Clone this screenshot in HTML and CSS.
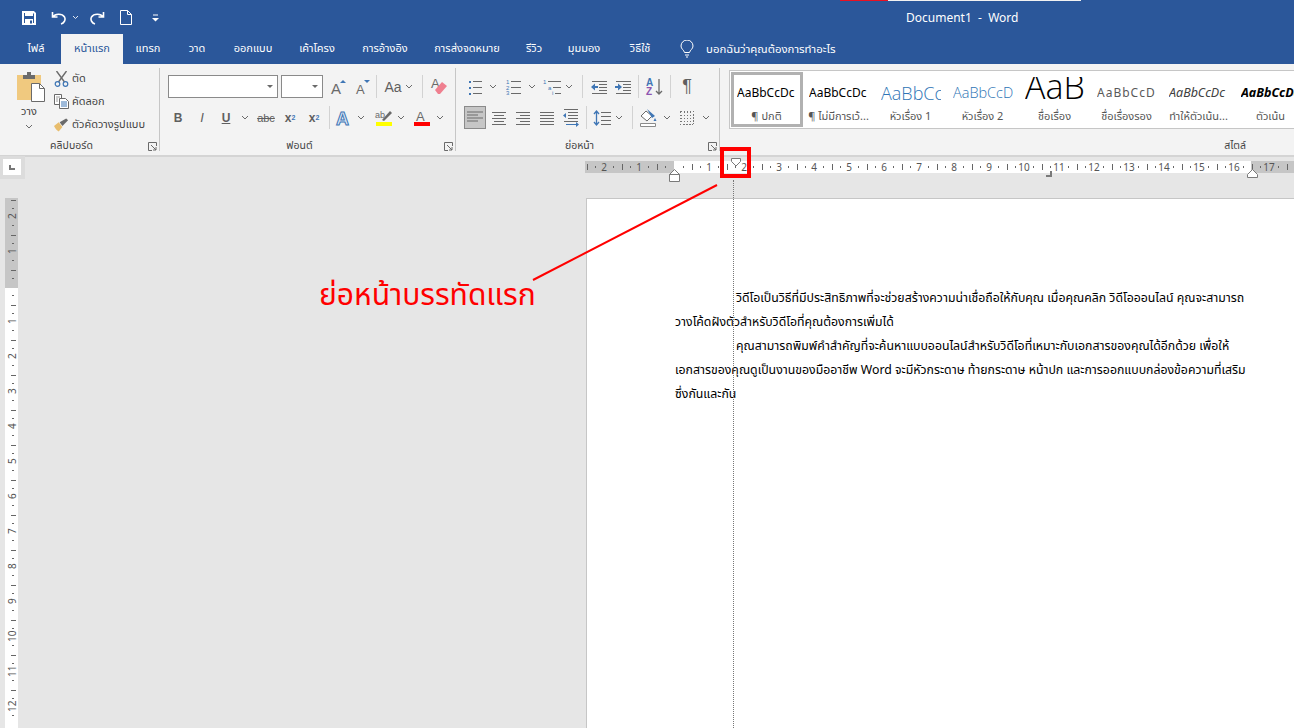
FILE: index.html
```html
<!DOCTYPE html>
<html lang="th">
<head>
    <meta charset="UTF-8">
    <title>Document1 - Word</title>
    <link rel="stylesheet" href="styles.css">
</head>
<body>
    <header class="titlebar">
        <div class="strip"><span class="strip-red"></span><span class="strip-white"></span></div>
        <div class="title-row">
            <div class="qat">
                <svg class="q-save" width="14" height="14" viewBox="0 0 14 14"><path d="M1 1h10.500L13 2.500V13H1z" fill="none" stroke="#fff" stroke-width="2"/><path d="M3 1h8v4H3zM3 8h8v5H3z" fill="#fff"/><path d="M8 9.500h2v3H8z" fill="#2b579a"/></svg>
                <svg class="q-undo" width="15" height="14" viewBox="0 0 15 14"><path d="M1.500 1v5h5M2 6c2-3.500 9-4 11.500 0 1.500 3-.5 6-3.500 7" fill="none" stroke="#fff" stroke-width="1.600"/></svg>
                <svg class="q-chev" width="7" height="5" viewBox="0 0 7 5"><path d="M1 1l2.500 2.500L6 1" fill="none" stroke="#dfe6f1"/></svg>
                <svg class="q-redo" width="15" height="14" viewBox="0 0 15 14"><path d="M13.500 1v5h-5M13 6C11 2.500 4 2 1.500 6 0 9 2 12 5 13" fill="none" stroke="#fff" stroke-width="1.600"/></svg>
                <svg class="q-new" width="12" height="15" viewBox="0 0 12 15"><path d="M.5.500h7l4 4v10H.5zM7.500.5v4h4" fill="none" stroke="#fff"/></svg>
                <svg class="q-more" width="7" height="8" viewBox="0 0 7 8"><path d="M1 1h5" stroke="#fff"/><path d="M0 4h7L3.500 7.500z" fill="#fff"/></svg>
            </div>
            <div class="doc-title">Document1&nbsp; -&nbsp; Word</div>
        </div>
        <nav class="tabs">
            <span class="tab t-file">ไฟล์</span>
            <span class="tab t-home active">หน้าแรก</span>
            <span class="tab t-insert">แทรก</span>
            <span class="tab t-draw">วาด</span>
            <span class="tab t-design">ออกแบบ</span>
            <span class="tab t-layout">เค้าโครง</span>
            <span class="tab t-refs">การอ้างอิง</span>
            <span class="tab t-mail">การส่งจดหมาย</span>
            <span class="tab t-review">รีวิว</span>
            <span class="tab t-view">มุมมอง</span>
            <span class="tab t-video">วิธีใช้</span>
            <svg class="bulb" width="14" height="18" viewBox="0 0 14 18"><path d="M4.500 12.500C4 10 1 9 1 6a6 6 0 0 1 12 0c0 3-3 4-3.500 6.500zM5 15h4M6 17h2" fill="none" stroke="#fff"/></svg>
            <span class="tell">บอกฉันว่าคุณต้องการทำอะไร</span>
        </nav>
    </header>

    <section class="ribbon">
        <div class="group g-clip">
            <div class="clip-body">
                <div class="paste">
                    <svg class="paste-icon" width="28" height="30" viewBox="0 0 28 30"><path d="M0 3h24v25H0z" fill="#f0c97f"/><path d="M6 3h12v4H6z" fill="#6b6b6b"/><path d="M10 0h4v3h-4z" fill="#6b6b6b"/><path d="M14.500 11.500h8l5 5v13h-13z" fill="#fff" stroke="#6a6a6a"/><path d="M22.500 11.500v5h5" fill="none" stroke="#6a6a6a"/></svg>
                    <span class="paste-label">วาง</span>
                    <svg class="chev" width="8" height="5" viewBox="0 0 8 5"><path d="M1 1l3 3 3-3" fill="none" stroke="#6a6a6a"/></svg>
                </div>
                <div class="clip-list">
                    <div class="clip-item">
                        <svg width="14" height="16" viewBox="0 0 14 16"><path d="M2 0l8 11M12 0L4 11" stroke="#6a6a6a" stroke-width="1.400"/><circle cx="3" cy="13" r="2.300" fill="none" stroke="#3f76b5" stroke-width="1.200"/><circle cx="11" cy="13" r="2.300" fill="none" stroke="#3f76b5" stroke-width="1.200"/></svg>
                        <span>ตัด</span>
                    </div>
                    <div class="clip-item">
                        <svg width="15" height="15" viewBox="0 0 15 15"><path d="M.5.500h7v10h-7z" fill="#fff" stroke="#6a6a6a"/><path d="M5.500 4.500h6l3 3v7h-9z" fill="#fff" stroke="#6a6a6a"/><path d="M7 8h6M7 10h6M7 12h6" stroke="#3f76b5"/><path d="M2 3h4M2 5h2M2 7h2" stroke="#9a9a9a"/></svg>
                        <span>คัดลอก</span>
                    </div>
                    <div class="clip-item">
                        <svg width="16" height="14" viewBox="0 0 16 14"><path d="M0 8l5-4 4 5-4 5c-2-1-4-4-5-6z" fill="#e8bd6d"/><path d="M6 4l3 4 6-6-2-2z" fill="#6a6a6a"/></svg>
                        <span>ตัวคัดวางรูปแบบ</span>
                    </div>
                </div>
            </div>
            <div class="group-label">คลิปบอร์ด</div>
            <svg class="launcher" width="9" height="9" viewBox="0 0 9 9"><path d="M8.500 4V.5H.5v8H4M3 3l5 5M8 5v3H5" fill="none" stroke="#6a6a6a"/></svg>
        </div>

        <div class="group g-font">
            <div class="row">
                <div class="combo c-font"><i class="caret"></i></div>
                <div class="combo c-size"><i class="caret"></i></div>
                <svg class="icon" width="18" height="18" viewBox="0 0 18 18"><text x="2" y="16" class="ic-a">A</text><path d="M11 5l3-3 3 3z" fill="#3f76b5"/></svg>
                <svg class="icon" width="18" height="18" viewBox="0 0 18 18"><text x="3" y="16" class="ic-a small">A</text><path d="M11 2l3 3 3-3z" fill="#3f76b5"/></svg>
                <i class="sep s5"></i>
                <span class="icon txt aa g7">Aa</span>
                <svg class="chev g3" width="8" height="5" viewBox="0 0 8 5"><path d="M1 1l3 3 3-3" fill="none" stroke="#6a6a6a"/></svg>
                <i class="sep g9"></i>
                <svg class="icon g7" width="18" height="18" viewBox="0 0 18 18"><text x="1" y="10" class="ic-a small">A</text><path d="M5 12l7-8 5 4-7 8H8z" fill="#ef7f8f"/></svg>
            </div>
            <div class="row r2">
                <span class="icon txt b">B</span>
                <span class="icon txt i">I</span>
                <span class="icon txt u">U</span>
                <svg class="chev" width="8" height="5" viewBox="0 0 8 5"><path d="M1 1l3 3 3-3" fill="none" stroke="#6a6a6a"/></svg>
                <span class="icon txt abc g8">abc</span>
                <span class="icon txt b">x<sub>2</sub></span>
                <span class="icon txt b">x<sup>2</sup></span>
                <i class="sep"></i>
                <svg class="icon" width="18" height="20" viewBox="0 0 18 20"><text x="0" y="17" class="ic-outline">A</text></svg>
                <svg class="chev g3" width="8" height="5" viewBox="0 0 8 5"><path d="M1 1l3 3 3-3" fill="none" stroke="#6a6a6a"/></svg>
                <svg class="icon g10" width="18" height="18" viewBox="0 0 18 18"><text x="0" y="9" class="ic-ab">ab</text><path d="M7 11l8-9 2 2-8 8z" fill="#6a6a6a"/><path d="M1 13h16v4H1z" fill="#ff0"/></svg>
                <svg class="chev g4" width="8" height="5" viewBox="0 0 8 5"><path d="M1 1l3 3 3-3" fill="none" stroke="#6a6a6a"/></svg>
                <svg class="icon g8" width="18" height="18" viewBox="0 0 18 18"><text x="3" y="12" class="ic-a small">A</text><path d="M1 13h16v4H1z" fill="#f00"/></svg>
                <svg class="chev g5" width="8" height="5" viewBox="0 0 8 5"><path d="M1 1l3 3 3-3" fill="none" stroke="#6a6a6a"/></svg>
            </div>
            <div class="group-label">ฟอนต์</div>
            <svg class="launcher" width="9" height="9" viewBox="0 0 9 9"><path d="M8.500 4V.5H.5v8H4M3 3l5 5M8 5v3H5" fill="none" stroke="#6a6a6a"/></svg>
        </div>

        <div class="group g-para">
            <div class="row">
                <svg class="icon" width="18" height="16" viewBox="0 0 18 16"><path d="M3 2h2v2H3zM3 8h2v2H3zM3 14h2v2H3z" fill="#3f76b5"/><path d="M7 2.500h9M7 8.500h9M7 14.500h9" stroke="#6a6a6a"/></svg>
                <svg class="chev g5" width="8" height="5" viewBox="0 0 8 5"><path d="M1 1l3 3 3-3" fill="none" stroke="#6a6a6a"/></svg>
                <svg class="icon g7" width="18" height="16" viewBox="0 0 18 16"><text x="2" y="5" class="ic-n">1</text><text x="2" y="10.500" class="ic-n">2</text><text x="2" y="16" class="ic-n">3</text><path d="M7 2.500h10M7 8.500h10M7 14.500h10" stroke="#6a6a6a"/></svg>
                <svg class="chev" width="8" height="5" viewBox="0 0 8 5"><path d="M1 1l3 3 3-3" fill="none" stroke="#6a6a6a"/></svg>
                <svg class="icon g7" width="18" height="16" viewBox="0 0 18 16"><text x="0" y="5" class="ic-n">1</text><text x="5" y="10.500" class="ic-n">a</text><text x="9" y="16" class="ic-n">i</text><path d="M5 2.500h13M10 8.500h8M12 14.500h6" stroke="#6a6a6a"/></svg>
                <svg class="chev g4" width="8" height="5" viewBox="0 0 8 5"><path d="M1 1l3 3 3-3" fill="none" stroke="#6a6a6a"/></svg>
                <i class="sep g9"></i>
                <svg class="icon g7" width="18" height="14" viewBox="0 0 18 14"><path d="M2 1.500h15M9 4.500h8M9 7.500h8M9 10.500h8M2 13.500h15" stroke="#6a6a6a"/><path d="M1 7l4-3.500V6h3v2H5v2.500z" fill="#3f76b5"/></svg>
                <svg class="icon" width="18" height="14" viewBox="0 0 18 14"><path d="M2 1.500h15M9 4.500h8M9 7.500h8M9 10.500h8M2 13.500h15" stroke="#6a6a6a"/><path d="M8 7L4 3.500V6H1v2h3v2.500z" fill="#3f76b5"/></svg>
                <i class="sep"></i>
                <svg class="icon g7" width="18" height="18" viewBox="0 0 18 18"><text x="0" y="8" class="ic-sort blue">A</text><text x="0" y="17" class="ic-sort violet">Z</text><path d="M13 1v15M10 13l3 3 3-3" fill="none" stroke="#6a6a6a" stroke-width="1.300"/></svg>
                <i class="sep"></i>
                <span class="icon txt pil g7">¶</span>
            </div>
            <div class="row r2">
                <svg class="icon active-btn" width="18" height="14" viewBox="0 0 18 14"><path d="M1 1.500h16M1 4.500h11M1 7.500h16M1 10.500h11" stroke="#6a6a6a"/></svg>
                <svg class="icon" width="18" height="14" viewBox="0 0 18 14"><path d="M2 1.500h14M4 4.500h10M2 7.500h14M4 10.500h10M2 13.500h14" stroke="#6a6a6a"/></svg>
                <svg class="icon" width="18" height="14" viewBox="0 0 18 14"><path d="M2 1.500h14M6 4.500h10M2 7.500h14M6 10.500h10M2 13.500h14" stroke="#6a6a6a"/></svg>
                <svg class="icon" width="18" height="14" viewBox="0 0 18 14"><path d="M2 1.500h14M2 4.500h14M2 7.500h14M2 10.500h14M2 13.500h14" stroke="#6a6a6a"/></svg>
                <svg class="icon" width="18" height="18" viewBox="0 0 18 18"><path d="M2 .5h14M6 3.500h10M6 6.500h10M6 9.500h10M2 12.500h14" stroke="#6a6a6a"/><path d="M1 6.500L4 4v5zM17 15.500L14 13v5z" fill="#3f76b5"/><path d="M4 15.500h10" stroke="#3f76b5"/></svg>
                <i class="sep"></i>
                <svg class="icon" width="18" height="18" viewBox="0 0 18 18"><path d="M3.500 3v12M1 5l2.500-3L6 5M1 13l2.500 3L6 13" fill="none" stroke="#3f76b5" stroke-width="1.300"/><path d="M8 3.500h10M8 7.500h10M8 11.500h10M8 15.500h10" stroke="#6a6a6a"/></svg>
                <svg class="chev g4" width="8" height="5" viewBox="0 0 8 5"><path d="M1 1l3 3 3-3" fill="none" stroke="#6a6a6a"/></svg>
                <i class="sep g9"></i>
                <svg class="icon g7" width="18" height="18" viewBox="0 0 18 18"><path d="M1 7l5-5 6 5-5 5z" fill="#fff" stroke="#6a6a6a"/><path d="M7 0l8 7-3 2z" fill="#3f76b5"/><path d="M15 9l1.500 3h-3z" fill="#3f76b5"/><path d="M.5 14.500h15v3H.5z" fill="#fff" stroke="#8a8a8a"/></svg>
                <svg class="chev g5" width="8" height="5" viewBox="0 0 8 5"><path d="M1 1l3 3 3-3" fill="none" stroke="#6a6a6a"/></svg>
                <svg class="icon g7" width="14" height="14" viewBox="0 0 14 14"><path class="dots" d="M.5.500h13v13H.5zM7 .5v13M.5 7h13M4 .5v13M10 .5v13M.5 4h13M.5 10h13"/></svg>
                <svg class="chev" width="8" height="5" viewBox="0 0 8 5"><path d="M1 1l3 3 3-3" fill="none" stroke="#6a6a6a"/></svg>
            </div>
            <div class="group-label">ย่อหน้า</div>
            <svg class="launcher" width="9" height="9" viewBox="0 0 9 9"><path d="M8.500 4V.5H.5v8H4M3 3l5 5M8 5v3H5" fill="none" stroke="#6a6a6a"/></svg>
        </div>

        <div class="group g-styles">
            <div class="gallery">
                <div class="style current"><div class="sample s-normal">AaBbCcDc</div><div class="style-name">¶ ปกติ</div></div>
                <div class="style"><div class="sample s-normal">AaBbCcDc</div><div class="style-name">¶ ไม่มีการเว้...</div></div>
                <div class="style"><div class="sample s-h1">AaBbCc</div><div class="style-name">หัวเรื่อง 1</div></div>
                <div class="style"><div class="sample s-h2">AaBbCcD</div><div class="style-name">หัวเรื่อง 2</div></div>
                <div class="style"><div class="sample s-title">AaB</div><div class="style-name">ชื่อเรื่อง</div></div>
                <div class="style"><div class="sample s-sub">AaBbCcD</div><div class="style-name">ชื่อเรื่องรอง</div></div>
                <div class="style"><div class="sample s-em">AaBbCcDc</div><div class="style-name">ทำให้ตัวเน้น...</div></div>
                <div class="style"><div class="sample s-strong">AaBbCcDc</div><div class="style-name">ตัวเน้น</div></div>
            </div>
            <div class="group-label styles-label">สไตล์</div>
        </div>
    </section>

    <section class="ruler-row">
        <div class="tab-stop"><span class="tab-stop-box"><i></i></span></div>
        <div class="h-ruler">
            <span class="cell">2</span><span class="cell">1</span><span class="cell"></span>
            <span class="cell">1</span><span class="cell">2</span><span class="cell">3</span><span class="cell">4</span>
            <span class="cell">5</span><span class="cell">6</span><span class="cell">7</span><span class="cell">8</span>
            <span class="cell">9</span><span class="cell">10</span><span class="cell">11</span><span class="cell">12</span>
            <span class="cell">13</span><span class="cell">14</span><span class="cell">15</span><span class="cell">16</span>
            <span class="cell">17</span><span class="cell"></span>
        </div>
        <svg class="marker m-first" width="10" height="9" viewBox="0 0 10 9"><path d="M.5.500h9v3l-4.500 4.500-4.500-4.500z" fill="#fff" stroke="#7a7a7a"/></svg>
        <svg class="marker m-hang" width="11" height="13" viewBox="0 0 11 13"><path d="M.5 5.500l5-5 5 5zM.5 5.500h10v7H.5z" fill="#fff" stroke="#7a7a7a"/></svg>
        <svg class="marker m-tab" width="6" height="6" viewBox="0 0 6 6"><path d="M4 0h2v6H0V4h4z" fill="#7a7a7a"/></svg>
        <svg class="marker m-right" width="11" height="9" viewBox="0 0 11 9"><path d="M.5 8.500v-3l5-5 5 5v3z" fill="#fff" stroke="#7a7a7a"/></svg>
    </section>

    <main class="workspace">
        <div class="v-ruler">
            <span class="vcell"></span><span class="vcell">2</span><span class="vcell">1</span><span class="vcell"></span>
            <span class="vcell">1</span><span class="vcell">2</span><span class="vcell">3</span><span class="vcell">4</span>
            <span class="vcell">5</span><span class="vcell">6</span><span class="vcell">7</span><span class="vcell">8</span>
            <span class="vcell">9</span><span class="vcell">10</span><span class="vcell">11</span><span class="vcell">12</span>
        </div>
        <article class="page">
            <p class="para">วิดีโอเป็นวิธีที่มีประสิทธิภาพที่จะช่วยสร้างความน่าเชื่อถือให้กับคุณ เมื่อคุณคลิก วิดีโอออนไลน์ คุณจะสามารถ<br>วางโค้ดฝังตัวสำหรับวิดีโอที่คุณต้องการเพิ่มได้</p>
            <p class="para">คุณสามารถพิมพ์คำสำคัญที่จะค้นหาแบบออนไลน์สำหรับวิดีโอที่เหมาะกับเอกสารของคุณได้อีกด้วย เพื่อให้<br>เอกสารของคุณดูเป็นงานของมืออาชีพ Word จะมีหัวกระดาษ ท้ายกระดาษ หน้าปก และการออกแบบกล่องข้อความที่เสริม<br>ซึ่งกันและกัน</p>
        </article>
    </main>

    <!-- annotation on top of the screenshot -->
    <div class="guide"></div>
    <div class="callout-box"></div>
    <svg class="callout-line" width="190" height="100" viewBox="0 0 190 100"><path d="M1 98L185 3" stroke="#f00" stroke-width="2"/></svg>
    <div class="callout-text">ย่อหน้าบรรทัดแรก</div>
</body>
</html>
```

FILE: styles.css
```css
* {
    box-sizing: border-box;
}

html, body {
    height: 100%;
}

body {
    margin: 0;
    height: 728px;
    overflow: hidden;
    background: #e6e6e6;
    color: #444;
    font-family: "Noto Sans Thai", Tahoma, "Noto Sans", "Liberation Sans", "DejaVu Sans", sans-serif;
    font-size: 11px;
    position: relative;
}

/* title bar and tabs */
.titlebar {
    background: #2b579a;
    height: 64px;
    color: #fff;
}

.strip {
    display: flex;
    height: 1px;
    padding-left: 840px;
}

.strip-red {
    width: 48px;
    background: #e81123;
}

.strip-white {
    width: 193px;
    background: #f2f2f2;
}

.title-row {
    display: flex;
    align-items: center;
    height: 33px;
}

.qat {
    display: flex;
    align-items: center;
    width: 906px;
    padding-left: 22px;
}

.q-undo { margin-left: 15px; }
.q-chev { margin-left: 6px; }
.q-redo { margin-left: 11px; }
.q-new { margin-left: 15px; }
.q-more { margin-left: 20px; }

.doc-title {
    font-family: "Noto Sans", sans-serif;
    font-size: 12px;
    color: #fff;
    margin-top: -1px;
}

.tabs {
    display: flex;
    align-items: center;
    height: 30px;
    padding-left: 11px;
}

.tab {
    display: flex;
    align-items: center;
    justify-content: center;
    height: 30px;
    padding-bottom: 1px;
    font-size: 11px;
    color: #fff;
    white-space: nowrap;
}

.tab.active {
    background: #f3f3f3;
    color: #2b579a;
}

.t-file { width: 50px; }
.t-home { width: 62px; }
.t-insert { width: 50px; }
.t-draw { width: 48px; }
.t-design { width: 64px; }
.t-layout { width: 64px; }
.t-refs { width: 72px; }
.t-mail { width: 92px; }
.t-review { width: 42px; }
.t-view { width: 58px; }
.t-video { width: 54px; }

.bulb { margin-left: 13px; }

.tell {
    margin-left: 12px;
    font-size: 11.400px;
    white-space: nowrap;
}

/* ribbon */
.ribbon {
    display: flex;
    height: 93px;
    background: #f3f3f3;
    border-bottom: 2px solid #d4d4d4;
}

.group {
    position: relative;
    display: flex;
    flex-direction: column;
    height: 91px;
    padding-top: 11px;
    flex: none;
}

.group::after {
    content: "";
    position: absolute;
    right: 0;
    top: 4px;
    bottom: 4px;
    width: 1px;
    background: #c6c6c6;
}

.g-clip { width: 160px; padding-top: 3px; }
.g-font { width: 296px; padding-left: 8px; }
.g-para { width: 264px; padding-left: 10px; }
.g-styles { flex: 1; padding: 6px 0 0 9px; min-width: 0; }
.g-styles::after { display: none; }

.group-label {
    position: absolute;
    left: 0;
    right: 17px;
    bottom: -1px;
    height: 20px;
    line-height: 20px;
    text-align: center;
    font-size: 10.500px;
    color: #444;
}

.styles-label {
    left: auto;
    right: 48px;
}

.launcher {
    position: absolute;
    right: 3px;
    bottom: 4px;
}

.row {
    display: flex;
    align-items: center;
    height: 23px;
}

.row.r2 {
    margin-top: 8px;
}

.g-font .r2 { padding-left: 1px; }

.row > * + * { margin-left: 6px; }
.row > .g3 { margin-left: 3px; }
.row > .g4 { margin-left: 4px; }
.row > .g5 { margin-left: 5px; }
.row > .g7 { margin-left: 7px; }
.row > .g8 { margin-left: 8px; }
.row > .g9 { margin-left: 9px; }
.row > .g10 { margin-left: 10px; }
.row > .s5 { margin-left: 5px; }

.row > .combo + .combo { margin-left: 3px; }

.icon {
    flex: none;
    width: 18px;
    display: block;
    overflow: visible;
}

svg text {
    font-family: "Liberation Sans", sans-serif;
}

.txt {
    display: flex;
    align-items: center;
    justify-content: center;
    font-family: "Liberation Sans", sans-serif;
    font-size: 12px;
    color: #5f5f5f;
}

.txt.aa { font-size: 14px; }
.txt.b { font-weight: bold; }
.txt.i { font-style: italic; font-size: 13px; }
.txt.u { text-decoration: underline; font-weight: bold; }
.txt.abc { text-decoration: line-through; font-size: 11px; }
.txt.pil { font-size: 18px; }
.txt sub, .txt sup { font-size: 7px; color: #3f76b5; line-height: 0; }

.ic-a { font-size: 15px; fill: #6a6a6a; }
.ic-a.small { font-size: 13px; }
.ic-outline { font-size: 18px; font-weight: bold; fill: #dce8f5; stroke: #3f76b5; stroke-width: 1; }
.ic-ab { font-size: 9px; fill: #6a6a6a; }
.ic-n { font-size: 6px; fill: #3f76b5; }
.ic-sort { font-size: 10px; font-weight: bold; }
.ic-sort.blue { fill: #3f76b5; }
.ic-sort.violet { fill: #8e55b0; }

.dots {
    fill: none;
    stroke: #777;
    stroke-dasharray: 1 2;
    shape-rendering: crispEdges;
}

.chev {
    flex: none;
    width: 8px;
    display: block;
}

.sep {
    flex: none;
    width: 1px;
    height: 23px;
    background: #d2d2d2;
}

.combo {
    position: relative;
    height: 23px;
    background: #fff;
    border: 1px solid #8a8a8a;
    flex: none;
}

.c-font { width: 110px; }
.c-size { width: 42px; }

.caret {
    position: absolute;
    right: 4px;
    top: 9px;
    border: 3px solid transparent;
    border-top: 3px solid #6a6a6a;
}

.active-btn {
    width: 22px;
    height: 23px;
    margin: 0 -2px;
    padding: 4px 2px;
    background: #c6c6c6;
    outline: 1px solid #8a8a8a;
    outline-offset: -1px;
}

/* clipboard group */
.clip-body {
    display: flex;
}

.paste {
    display: flex;
    flex-direction: column;
    align-items: center;
    width: 54px;
    padding: 5px 0 0 4px;
}

.paste-icon {
    flex: none;
    margin-left: 4px;
}

.paste-label {
    margin-top: 2px;
    font-size: 11px;
    line-height: 16px;
}

.paste .chev {
    margin-top: 4px;
}

.clip-list {
    display: flex;
    flex-direction: column;
}

.clip-item {
    display: flex;
    align-items: center;
    gap: 3px;
    height: 23px;
    font-size: 11px;
    white-space: nowrap;
}

.clip-item svg {
    flex: none;
    width: 15px;
}

/* style gallery */
.gallery {
    display: flex;
    height: 59px;
    background: #fff;
    border-top: 1px solid #c6c6c6;
    border-bottom: 1px solid #c6c6c6;
    border-left: 1px solid #c6c6c6;
    overflow: hidden;
    padding: 1px 0 0 1px;
}

.style {
    flex: none;
    width: 72px;
    height: 55px;
    padding: 3px 4px 0 3px;
    text-align: center;
    overflow: hidden;
}

.style.current {
    border: 3px solid #b1b1b1;
    padding: 0 1px 0 0;
}

.sample {
    height: 32px;
    margin: 2px 2px -2px 3px;
    line-height: 32px;
    color: #000;
    font-family: "Noto Sans", sans-serif;
    font-size: 12px;
    white-space: nowrap;
    overflow: hidden;
    text-align: left;
}

.s-h1 { font-family: "Open Sans", sans-serif; font-weight: 300; font-size: 18px; color: #2e74b5; }
.s-h2 { font-family: "Open Sans", sans-serif; font-weight: 300; font-size: 14.500px; color: #2e74b5; }
.s-title { font-family: "Open Sans", sans-serif; font-weight: 300; font-size: 34px; line-height: 18px; }
.s-sub { color: #595959; letter-spacing: 1px; }
.s-em { font-style: italic; color: #404040; font-size: 12.500px; }
.s-strong { font-style: italic; font-weight: bold; font-size: 12.500px; }

.style-name {
    height: 20px;
    line-height: 20px;
    font-size: 11px;
    color: #555;
    white-space: nowrap;
    margin-top: -2px;
}

/* rulers */
.ruler-row {
    position: relative;
    height: 41px;
}

.tab-stop {
    position: absolute;
    left: 0;
    top: -1px;
    width: 25px;
    height: 23px;
    padding: 3px;
    background: #dcdcdc;
}

.tab-stop-box {
    display: block;
    position: relative;
    width: 18px;
    height: 16px;
    background: #fff;
}

.tab-stop-box i {
    position: absolute;
    left: 6px;
    top: 6px;
    width: 6px;
    height: 5px;
    border-left: 2px solid #777;
    border-bottom: 2px solid #777;
}

.h-ruler {
    position: absolute;
    left: 585px;
    right: 0;
    top: 4px;
    height: 12px;
    display: flex;
    padding-left: 1.5px;
    overflow: hidden;
    background: linear-gradient(to right, #c6c6c6 89px, #fff 89px, #fff 666px, #c6c6c6 666px);
}

.cell {
    flex: none;
    width: 35px;
    height: 12px;
    text-align: center;
    font-family: "Noto Sans", sans-serif;
    font-size: 10px;
    line-height: 12px;
    color: #555;
    background:
        linear-gradient(#666, #666) 0 3px / 1px 6px no-repeat,
        linear-gradient(#666, #666) 8.5px 5px / 1px 2px no-repeat,
        linear-gradient(#666, #666) 26px 5px / 1px 2px no-repeat;
}

.marker {
    position: absolute;
    display: block;
}

.m-first { left: 731px; top: 1px; }
.m-hang { left: 669px; top: 12px; }
.m-tab { left: 1046px; top: 14px; }
.m-right { left: 1247px; top: 12px; }

.workspace {
    position: relative;
    height: 530px;
    overflow: hidden;
}

.v-ruler {
    position: absolute;
    left: 5px;
    top: -1px;
    width: 13px;
    height: 531px;
    overflow: hidden;
    background: linear-gradient(#c6c6c6 91px, #fff 91px);
    display: flex;
    flex-direction: column;
}

.vcell {
    flex: none;
    width: 13px;
    height: 35px;
    padding-top: 2px;
    display: flex;
    align-items: center;
    justify-content: center;
    writing-mode: vertical-rl;
    transform: rotate(180deg);
    font-family: "Noto Sans", sans-serif;
    font-size: 10px;
    color: #555;
    background:
        linear-gradient(#666, #666) 2px 100% / 5px 1px no-repeat,
        linear-gradient(#666, #666) 4px 8.5px / 2px 1px no-repeat,
        linear-gradient(#666, #666) 4px 26px / 2px 1px no-repeat;
}

.vcell:first-child {
    margin-top: -32.500px;
}

.page {
    position: absolute;
    left: 586px;
    top: 0;
    right: 0;
    bottom: 0;
    background: #fff;
    border-left: 1px solid #c6c6c6;
    border-top: 1px solid #c6c6c6;
    padding: 88px 0 0 88px;
    color: #000;
    font-size: 12.300px;
    line-height: 24px;
}

.para {
    margin: 0;
    text-indent: 61px;
    white-space: nowrap;
}

/* annotation */
.guide {
    position: absolute;
    left: 733px;
    top: 180px;
    bottom: 0;
    border-left: 1px dotted #777;
}

.callout-box {
    position: absolute;
    left: 720px;
    top: 147px;
    width: 31px;
    height: 31px;
    border: 4px solid #f00;
}

.callout-line {
    position: absolute;
    left: 532px;
    top: 182px;
}

.callout-text {
    position: absolute;
    left: 319px;
    top: 274px;
    font-size: 30px;
    line-height: 44px;
    color: #f00;
    white-space: nowrap;
}
```
